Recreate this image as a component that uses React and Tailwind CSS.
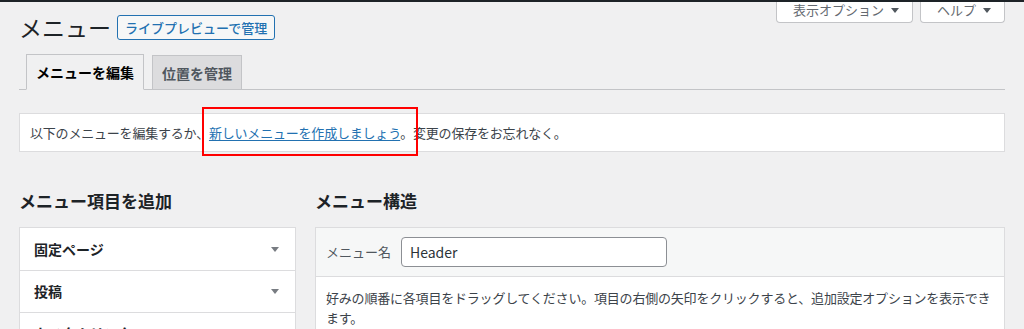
import { useState } from "react";

const Caret = ({ className = "" }) => (
  <svg className={className} width="8" height="5" viewBox="0 0 8 5" fill="currentColor">
    <polygon points="0,0 8,0 4,5" />
  </svg>
);

const menuBoxes = ["固定ページ", "投稿", "カスタムリンク", "カテゴリー"];

export default function App() {
  const [menuName, setMenuName] = useState("Header");
  const [tab, setTab] = useState("edit");

  return (
    <div className="h-[329px] overflow-hidden bg-[#f0f0f1] text-[#3c434a] font-['Noto_Sans_CJK_JP',sans-serif]">
      <div className="h-[2px] bg-[#1d2327]" />

      <div className="px-[19px]">
        {/* title row + screen meta links */}
        <div className="flex items-start justify-between">
          <div className="flex items-center gap-[6px] pt-[11px]">
            <h1 className="text-[23px] leading-[28px] font-normal text-[#1d2327]">メニュー</h1>
            <button className="mt-[1px] h-[25px] px-[7px] rounded-[3px] border border-[#2271b1] bg-[#f6f7f7] text-[13px] font-medium text-[#2271b1] leading-none">
              ライブプレビューで管理
            </button>
          </div>
          <div className="flex gap-[7px]">
            <button className="h-[21px] w-[137px] flex items-end overflow-hidden pl-[16px] pb-[1px] border border-t-0 border-[#c3c4c7] rounded-b-[4px] bg-white text-[13px] leading-[22px] text-[#646970]">
              <span className="whitespace-nowrap">表示オプション</span>
              <span className="w-[22px] h-[22px] flex items-center justify-center">
                <Caret className="text-[#50575e]" />
              </span>
            </button>
            <button className="h-[21px] w-[85px] flex items-end overflow-hidden pl-[16px] pb-[1px] border border-t-0 border-[#c3c4c7] rounded-b-[4px] bg-white text-[13px] leading-[22px] text-[#646970]">
              <span className="whitespace-nowrap">ヘルプ</span>
              <span className="w-[22px] h-[22px] flex items-center justify-center">
                <Caret className="text-[#50575e]" />
              </span>
            </button>
          </div>
        </div>

        {/* tabs */}
        <div className="mt-[13px] flex items-end border-b border-[#c3c4c7]">
          <button
            onClick={() => setTab("edit")}
            className={`ml-[7px] -mb-px h-[36px] px-[9px] border border-[#c3c4c7] text-[14px] font-bold leading-[24px] ${
              tab === "edit" ? "bg-[#f0f0f1] border-b-[#f0f0f1] text-[#000]" : "bg-[#dcdcde] text-[#50575e]"
            }`}
          >
            メニューを編集
          </button>
          <button
            onClick={() => setTab("locations")}
            className={`ml-[8px] -mb-px h-[35px] px-[9px] border border-[#c3c4c7] text-[14px] font-bold leading-[24px] ${
              tab === "locations" ? "bg-[#f0f0f1] border-b-[#f0f0f1] text-[#000]" : "bg-[#dcdcde] text-[#50575e]"
            }`}
          >
            位置を管理
          </button>
        </div>

        {/* notice */}
        <div className="relative mt-[23px] h-[39px] flex items-center pl-[10px] border border-[#dcdcde] bg-white text-[13px] tracking-[-0.2px] text-[#3c434a]">
          <p>
            以下のメニューを編集するか、
            <a href="#" className="text-[#2271b1] underline underline-offset-2">新しいメニューを作成しましょう</a>
            。変更の保存をお忘れなく。
          </p>
          <div className="absolute left-[182px] top-[-7px] w-[216px] h-[49px] border-2 border-[#ff0000]" />
        </div>

        {/* columns */}
        <div className="mt-[38px] flex gap-[19px]">
          <div className="w-[277px] shrink-0">
            <h2 className="text-[17px] leading-[22px] font-bold text-[#1d2327]">メニュー項目を追加</h2>
            <div className="mt-[15px] border border-[#dcdcde] bg-white">
              {menuBoxes.map((label, i) => (
                <div
                  key={label}
                  className={`h-[42px] flex items-center justify-between pl-[14px] pr-[16px] ${i > 0 ? "border-t border-[#dcdcde]" : ""}`}
                >
                  <span className="text-[14px] font-bold text-[#1d2327]">{label}</span>
                  <Caret className="text-[#787c82]" />
                </div>
              ))}
            </div>
          </div>

          <div className="flex-1">
            <h2 className="text-[17px] leading-[22px] font-bold text-[#1d2327]">メニュー構造</h2>
            <div className="mt-[15px] border border-[#dcdcde] bg-white">
              <div className="h-[49px] flex items-center px-[10px] bg-[#f6f7f7] border-b border-[#dcdcde]">
                <label className="text-[13px] text-[#50575e] mr-[10px]">メニュー名</label>
                <input
                  value={menuName}
                  onChange={(e) => setMenuName(e.target.value)}
                  className="w-[266px] h-[30px] px-[8px] rounded-[4px] border border-[#8c8f94] bg-white text-[14px] text-[#2c3338] outline-none"
                />
              </div>
              <div className="pt-[11px] px-[10px] pb-[12px]">
                <p className="text-[13px] leading-[20px] tracking-[-0.2px] text-[#3c434a]">
                  好みの順番に各項目をドラッグしてください。項目の右側の矢印をクリックすると、追加設定オプションを表示できます。
                </p>
              </div>
            </div>
          </div>
        </div>
      </div>
    </div>
  );
}
